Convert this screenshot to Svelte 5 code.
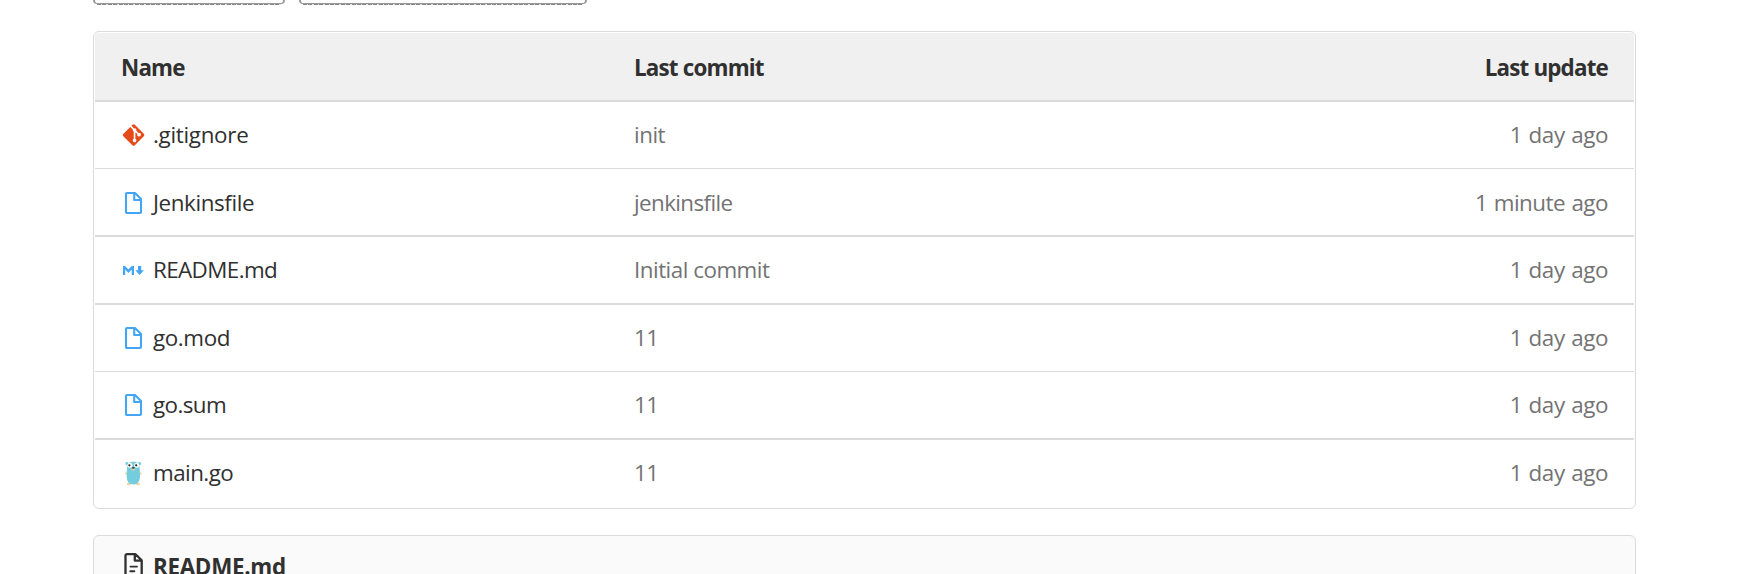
<script>
  const rows = [
    { icon: 'git', name: '.gitignore', ns: -0.3, commit: 'init', cs: -0.5, date: '1 day ago', ds: -0.4, line: 1 },
    { icon: 'file', name: 'Jenkinsfile', ns: -0.4, commit: 'jenkinsfile', cs: -0.6, date: '1 minute ago', ds: -0.5, line: 2, low: true },
    { icon: 'md', name: 'README.md', ns: -0.6, commit: 'Initial commit', cs: -0.5, date: '1 day ago', ds: -0.4, line: 2 },
    { icon: 'file', name: 'go.mod', ns: -0.4, commit: '11', cs: -0.5, date: '1 day ago', ds: -0.4, line: 1 },
    { icon: 'file', name: 'go.sum', ns: -0.6, commit: '11', cs: -0.5, date: '1 day ago', ds: -0.4, line: 2 },
    { icon: 'go', name: 'main.go', ns: -0.55, commit: '11', cs: -0.5, date: '1 day ago', ds: -0.4, line: 0 }
  ];
</script>

<main>
  <div class="actions">
    <div class="stub first"></div>
    <div class="stub second"></div>
  </div>

  <section class="files">
    <div class="row head">
      <span class="name">Name</span>
      <span class="commit">Last commit</span>
      <span class="date">Last update</span>
    </div>
    {#each rows as r}
      <div class="row" class:thin={r.line === 1} class:thick={r.line === 2} class:low={r.low}>
        <span class="name">
          <svg class="icon" viewBox="0 0 24 26" width="24" height="26">
            {#if r.icon === 'git'}
              <path transform="translate(.7 .9)" fill="#e64a19" d="M1.500 11.100 8.600 4l2.500 2.500a1.800 1.800 0 0 0 .9 2.100v7.200a1.800 1.800 0 1 0 1.700 0V9.300l2 2a1.800 1.800 0 1 0 1.200-1.200l-2.300-2.300a1.800 1.800 0 0 0-2.300-2.300L9.800 2.800l.9-.9a1.700 1.700 0 0 1 2.400 0l9 9a1.700 1.700 0 0 1 0 2.400l-9 9a1.700 1.700 0 0 1-2.400 0l-9.100-9a1.600 1.600 0 0 1-.1-2.200z" />
            {:else if r.icon === 'file'}
              <path fill="none" stroke="#42a5f5" stroke-width="2.100" stroke-linejoin="round" d="M6 3h8l6 6v13a1 1 0 0 1-1 1H6a1 1 0 0 1-1-1V4a1 1 0 0 1 1-1zM13.200 3.500V10H19.500" />
            {:else if r.icon === 'md'}
              <path fill="#42a5f5" d="M2 9h2l3.400 3.600L10.800 9H13v9h-2.300v-5.400l-3.300 3.300-3.200-3.300V18H2zM17 9h3.200v4.200h2.600L18.600 18l-4.200-4.800H17z" />
            {:else}
              <g fill="#f6d2a2"><ellipse cx="5.300" cy="13.500" rx="1.500" ry="1" /><ellipse cx="19.400" cy="13.500" rx="1.500" ry="1" /><ellipse cx="7.600" cy="24" rx="2" ry="1.200" /><ellipse cx="17" cy="24" rx="2" ry="1.200" /></g>
              <circle cx="6" cy="3.600" r="1.600" fill="#74cddd" /><circle cx="18.600" cy="3.600" r="1.600" fill="#74cddd" />
              <path fill="#74cddd" d="M12.300 1.800c4.200 0 6 1.400 6.200 5 .1 2.500.6 5.200.5 9.200-.2 5.700-2.100 8.400-6.700 8.400S5.900 21.700 5.700 16c-.1-4 .4-6.700.5-9.200.2-3.600 2-5 6.100-5z" />
              <circle cx="8.900" cy="5.300" r="2.500" fill="#fff" /><circle cx="15.700" cy="5.300" r="2.500" fill="#fff" />
              <circle cx="8.400" cy="5.300" r="1.100" fill="#222" /><circle cx="15.200" cy="5.300" r="1.100" fill="#222" />
              <ellipse cx="12.300" cy="9.300" rx="1.600" ry="1.300" fill="#f6d2a2" /><ellipse cx="12.300" cy="7.900" rx="1.400" ry=".8" fill="#333" />
            {/if}
          </svg>
          <span style:letter-spacing="{r.ns}px">{r.name}</span>
        </span>
        <span class="commit" style:letter-spacing="{r.cs}px">{r.commit}</span>
        <span class="date" style:letter-spacing="{r.ds}px">{r.date}</span>
      </div>
    {/each}
  </section>

  <section class="readme">
    <svg class="icon" viewBox="0 0 24 26" width="24" height="26">
      <path fill="none" stroke="#303030" stroke-width="2.300" stroke-linejoin="round" d="M6 2.200h8.500L20.700 8.300V22.500a1.500 1.500 0 0 1-1.500 1.500H6a1.500 1.500 0 0 1-1.500-1.500v-19A1.300 1.300 0 0 1 6 2.200zM13.800 2.500V8.600H20.500" />
      <path fill="none" stroke="#303030" stroke-width="1.900" stroke-linecap="round" d="M9.500 14.600h6.500M9.300 19.300h4" />
    </svg>
    <strong>README.md</strong>
  </section>
</main>

<style>
  :global(body) { background: #fff; }
  main {
    height: 574px;
    overflow: hidden;
    padding: 0 101px 0 93px;
    font: 22.4px/30px "Open Sans", "Noto Sans", sans-serif;
    color: #303030;
  }
  .actions { display: flex; gap: 14px; height: 31px; }
  .stub {
    box-sizing: border-box;
    height: 4px;
    border: solid #999;
    border-width: 0 2px 1px;
    border-radius: 0 0 6px 6px;
  }
  .stub::after {
    content: "";
    display: block;
    height: 1px;
    margin: 4px 2px 0;
    background: repeating-linear-gradient(90deg, #868686 0 4px, #ddd 4px 5.400px);
  }
  .first { width: 192px; }
  .second { width: 288px; }
  .files {
    box-sizing: border-box;
    height: 478px;
    padding: 1px;
    border: 1px solid #dbdbdb;
    border-radius: 6px;
  }
  .row {
    display: grid;
    grid-template-columns: 513px 1fr auto;
    align-items: center;
    height: 66px;
    padding: 0 26px;
    white-space: nowrap;
  }
  .low { box-sizing: border-box; height: 68px; padding-top: 1px; }
  .low .name > span, .low .commit, .low .date { padding-top: 1px; }
  .head {
    box-sizing: border-box;
    height: 69px;
    padding-top: 2px;
    background: #f0f0f0;
    border-bottom: 2px solid #dbdbdb;
    border-radius: 4px 4px 0 0;
    font-weight: 700;
    letter-spacing: -0.82px;
  }
  .thin { border-bottom: 1px solid #dbdbdb; }
  .thick { border-bottom: 2px solid #dbdbdb; }
  .name { display: flex; align-items: center; gap: 8px; }
  .icon { flex: none; }
  .date { word-spacing: 1px; }
  .head .date { word-spacing: 0; }
  .row:not(.head) .commit, .row:not(.head) .date { color: #737373; }
  .readme {
    display: flex;
    align-items: flex-start;
    gap: 8px;
    box-sizing: border-box;
    height: 70px;
    margin-top: 26px;
    padding: 16px 27px 0;
    border: 1px solid #dbdbdb;
    border-radius: 6px;
    background: #fafafa;
    letter-spacing: -0.3px;
  }
</style>
